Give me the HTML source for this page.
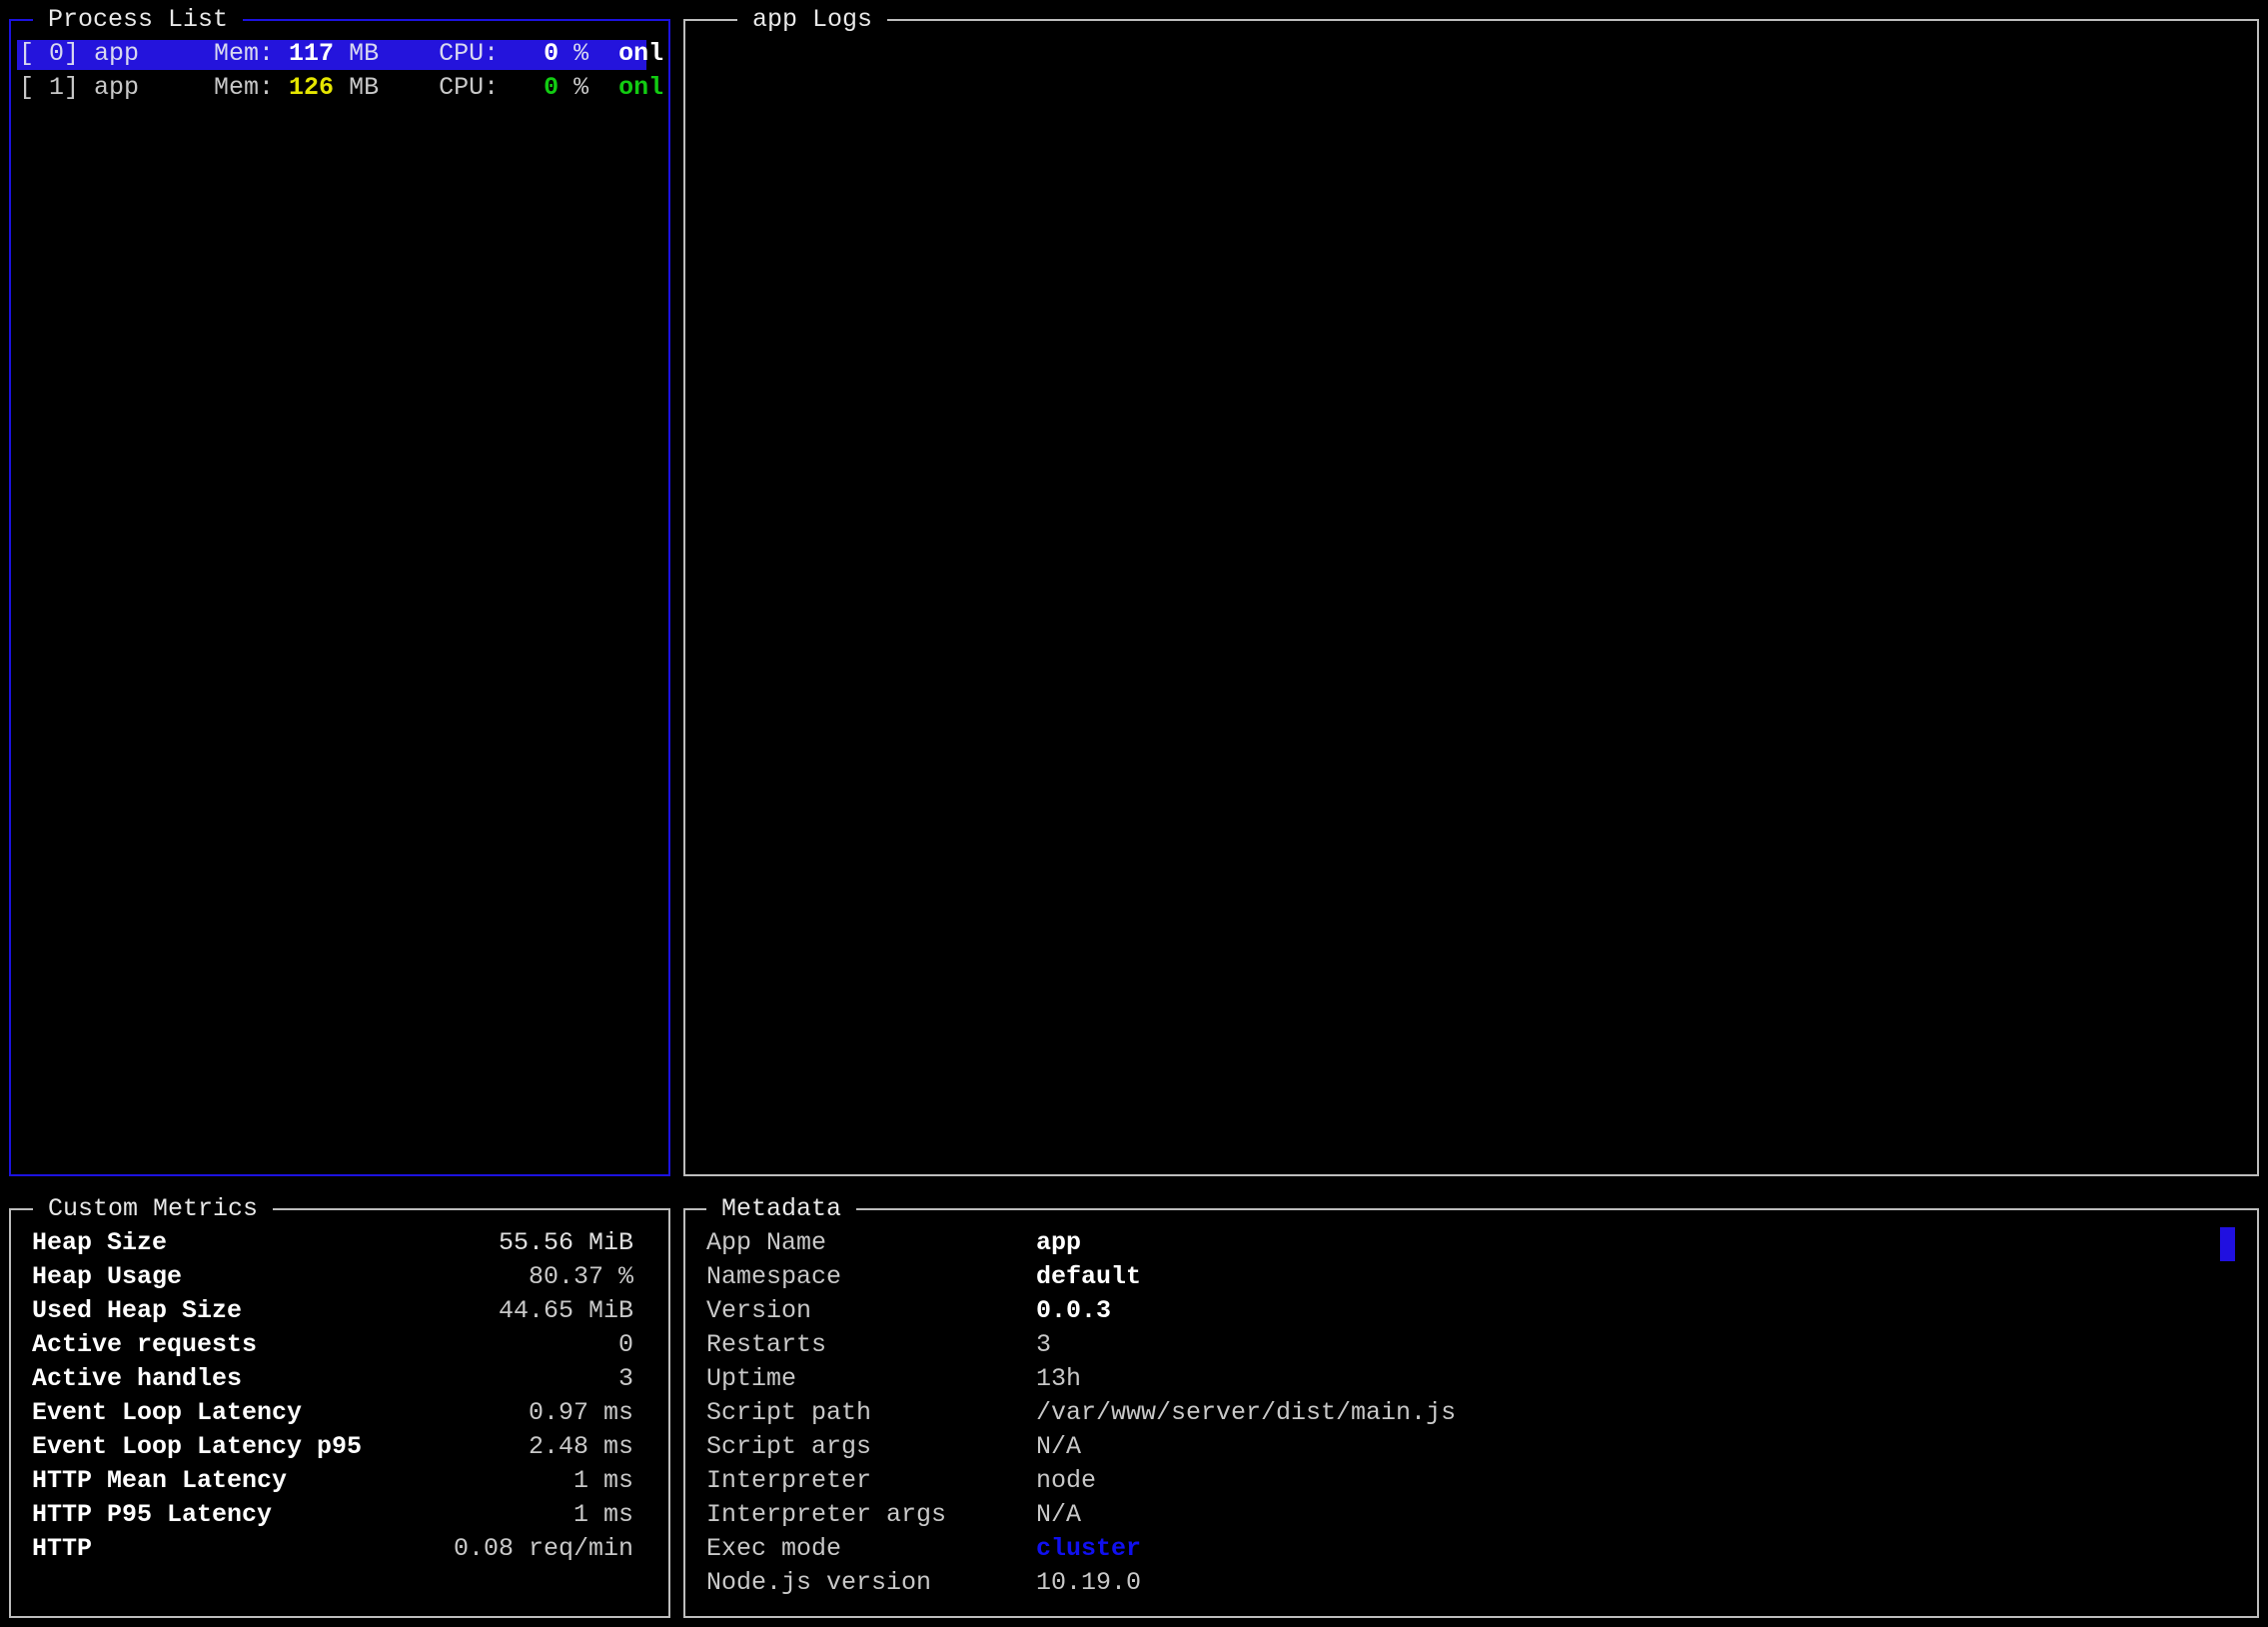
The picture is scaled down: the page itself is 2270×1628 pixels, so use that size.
<!DOCTYPE html>
<html><head><meta charset="utf-8"><style>
html,body{margin:0;padding:0;background:#000;width:2270px;height:1628px;overflow:hidden}
body{position:relative;font-family:"Liberation Mono","DejaVu Sans Mono",monospace;font-size:25px;color:#c8c8c8}
.box{position:absolute;box-sizing:border-box;border:2px solid #bdbdbd}
.blue{border-color:#1c12e0}
.t{position:absolute;white-space:pre;line-height:34px;height:34px}
.title{position:absolute;white-space:pre;line-height:34px;background:#000;padding:0 15px;color:#e8e8e8}
b{color:#fff}
.y{color:#e6e600}.g{color:#12cc12}
.r{text-align:right}
</style></head><body>
<div class="box blue" style="left:9px;top:19px;width:662px;height:1158px"></div>
<div class="title" style="left:33px;top:3px">Process List</div>
<div style="position:absolute;left:17px;top:40px;width:630px;height:30px;background:#2414dc"></div>
<div class="t" style="left:19px;top:37px;color:#d8d8f0">[ 0] app     Mem: <b>117</b> MB    CPU:   <b>0</b> %  <b>onl</b></div>
<div class="t" style="left:19px;top:71px">[ 1] app     Mem: <b class="y">126</b> MB    CPU:   <b class="g">0</b> %  <b class="g">onl</b></div>

<div class="box" style="left:684px;top:19px;width:1577px;height:1158px"></div>
<div class="title" style="left:738px;top:3px">app Logs</div>

<div class="box" style="left:9px;top:1209px;width:662px;height:410px"></div>
<div class="title" style="left:33px;top:1193px">Custom Metrics</div>
<div style="position:absolute;left:32px;top:1227px;width:602px;line-height:34px">
<div style="display:flex;justify-content:space-between"><b>Heap Size</b><span style="color:#e0e0e0">55.56 MiB</span></div>
<div style="display:flex;justify-content:space-between"><b>Heap Usage</b><span>80.37 %</span></div>
<div style="display:flex;justify-content:space-between"><b>Used Heap Size</b><span>44.65 MiB</span></div>
<div style="display:flex;justify-content:space-between"><b>Active requests</b><span>0</span></div>
<div style="display:flex;justify-content:space-between"><b>Active handles</b><span>3</span></div>
<div style="display:flex;justify-content:space-between"><b>Event Loop Latency</b><span>0.97 ms</span></div>
<div style="display:flex;justify-content:space-between"><b>Event Loop Latency p95</b><span>2.48 ms</span></div>
<div style="display:flex;justify-content:space-between"><b>HTTP Mean Latency</b><span>1 ms</span></div>
<div style="display:flex;justify-content:space-between"><b>HTTP P95 Latency</b><span>1 ms</span></div>
<div style="display:flex;justify-content:space-between"><b>HTTP</b><span>0.08 req/min</span></div>
</div>

<div class="box" style="left:684px;top:1209px;width:1577px;height:410px"></div>
<div class="title" style="left:707px;top:1193px">Metadata</div>
<div style="position:absolute;left:707px;top:1227px;line-height:34px;white-space:pre">App Name
Namespace
Version
Restarts
Uptime
Script path
Script args
Interpreter
Interpreter args
Exec mode
Node.js version</div>
<div style="position:absolute;left:1037px;top:1227px;line-height:34px;white-space:pre"><b>app</b>
<b>default</b>
<b>0.0.3</b>
3
13h
/var/www/server/dist/main.js
N/A
node
N/A
<b style="color:#1010f0">cluster</b>
10.19.0</div>
<div style="position:absolute;left:2222px;top:1228px;width:15px;height:34px;background:#2010e0"></div>
</body></html>
